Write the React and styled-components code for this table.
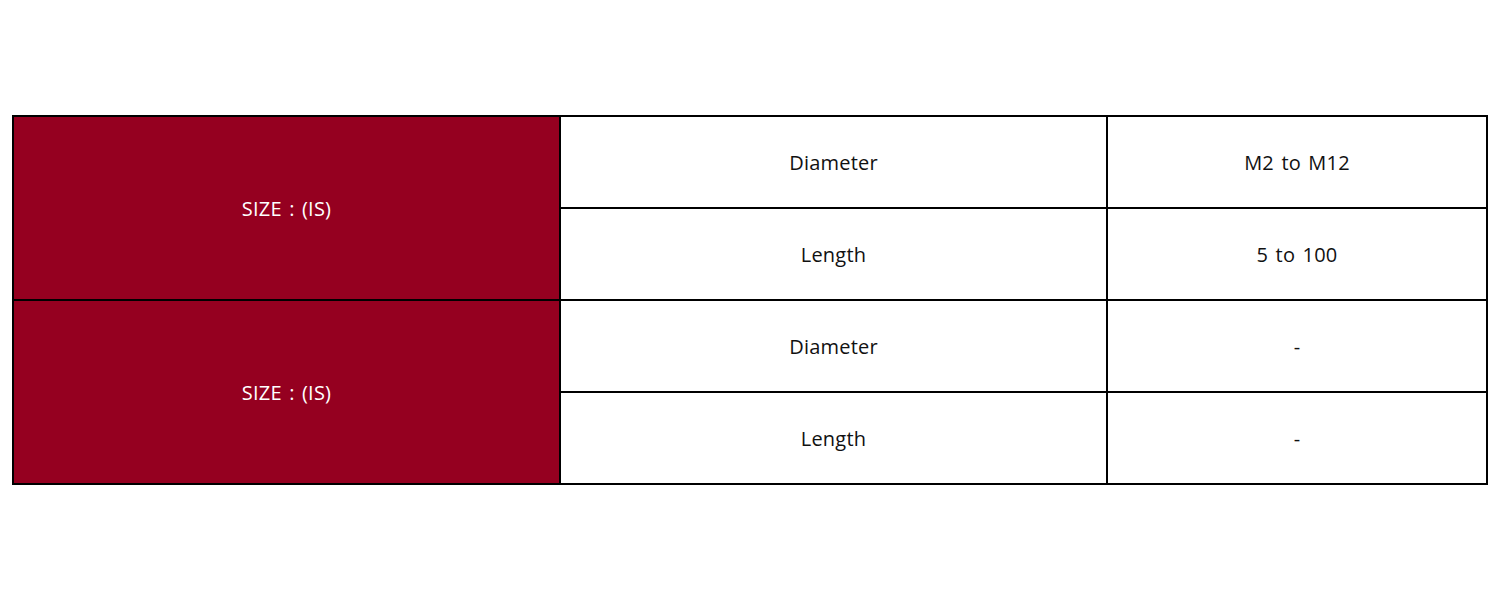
import React from 'react';
import styled, { createGlobalStyle } from 'styled-components';

const GlobalStyle = createGlobalStyle`
  html, body {
    margin: 0;
    padding: 0;
    background: #ffffff;
  }
`;

const groups = [
  { label: 'SIZE : (IS)', rows: [['Diameter', 'M2 to M12'], ['Length', '5 to 100']] },
  { label: 'SIZE : (IS)', rows: [['Diameter', '-'], ['Length', '-']] },
];

function App() {
  return (
    <PageLayout>
      <GlobalStyle />
      <SpecGrid>
        {groups.map((group, gi) => (
          <React.Fragment key={gi}>
            <LabelCell span={group.rows.length}>{group.label}</LabelCell>
            {group.rows.map(([name, value]) => (
              <React.Fragment key={name}>
                <ValueCell>{name}</ValueCell>
                <ValueCell>{value}</ValueCell>
              </React.Fragment>
            ))}
          </React.Fragment>
        ))}
      </SpecGrid>
    </PageLayout>
  );
}

const PageLayout = styled.div`
  width: 1500px;
  height: 600px;
  box-sizing: border-box;
  padding: 115px 12px 0px 12px;
  font-family: 'Open Sans', sans-serif;
`;

const SpecGrid = styled.div`
  display: grid;
  grid-template-columns: 545px 545px 1fr;
  grid-auto-rows: 90px;
  gap: 2px;
  padding: 2px;
  background-color: #000000;
`;

const Cell = styled.div`
  display: flex;
  justify-content: center;
  align-items: center;
  font-size: 20px;
  font-weight: 400;
  letter-spacing: 0.2px;
  word-spacing: 2px;
`;

const LabelCell = styled(Cell)`
  grid-row: span ${(p) => p.span};
  background-color: #950020;
  color: #ffffff;
`;

const ValueCell = styled(Cell)`
  background-color: #ffffff;
  color: #111111;
`;

export default App;
